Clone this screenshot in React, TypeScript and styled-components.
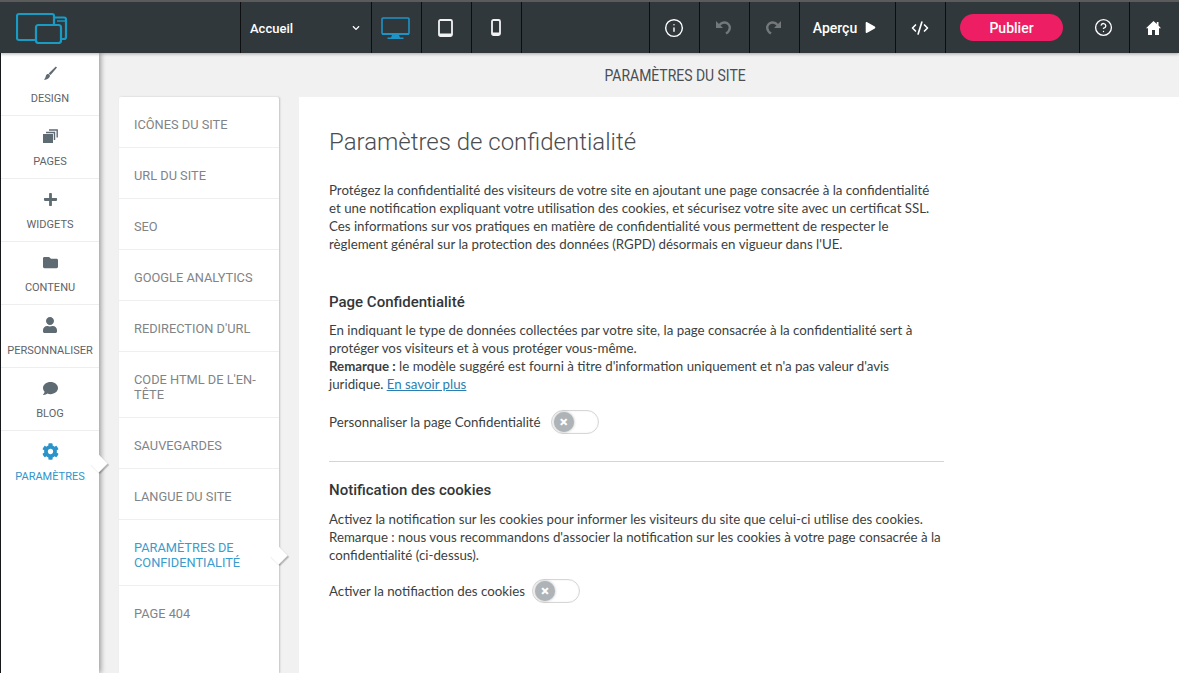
import styled, { createGlobalStyle } from 'styled-components';
import { ReactNode } from 'react';
import { Info, CircleHelp, CodeXml } from 'lucide-react';
import { FaPlus, FaFolder, FaUser, FaComment, FaCog, FaPlay, FaChevronDown } from 'react-icons/fa';

const GlobalStyle = createGlobalStyle`
  html, body {
    margin: 0;
    padding: 0;
    height: 100%;
    overflow: hidden;
    background: #f1f1f1;
    font-family: Roboto, "Liberation Sans", sans-serif;
  }
  * { box-sizing: border-box; }
`;

const Page = styled.div`
  width: 1179px;
  height: 673px;
  display: flex;
  flex-direction: column;
  overflow: hidden;
`;

/* barre du haut */
const TopBar = styled.header`
  flex: 0 0 53px;
  display: flex;
  align-items: stretch;
  background: #30383c;
  border-top: 2px solid #5b5b5b;
  position: relative;
  z-index: 3;
  box-shadow: 0 1px 3px rgba(0, 0, 0, 0.3);
`;

const LogoCell = styled.div`
  width: 240px;
  padding: 10px 0 0 16px;
`;

const ToolCell = styled.div<{ $w: number; $muted?: boolean }>`
  width: ${p => p.$w}px;
  flex: 0 0 ${p => p.$w}px;
  display: flex;
  align-items: center;
  justify-content: center;
  padding-right: 2px;
  border-left: 1px solid #0c0e0f;
  color: ${p => (p.$muted ? '#73787b' : '#fff')};
`;

const PageSelect = styled(ToolCell)`
  justify-content: space-between;
  padding: 1px 11px 0 9px;
  font-size: 13px;
  font-weight: 500;
`;

const PreviewCell = styled(ToolCell)`
  padding-right: 6px;
`;

const PreviewLabel = styled.span`
  font-size: 14px;
  font-weight: 500;
  margin-right: 8px;
`;

const PublishButton = styled.button`
  width: 103px;
  height: 27px;
  border: none;
  border-radius: 14px;
  background: #ed1e63;
  color: #fff;
  font-family: Roboto, sans-serif;
  font-size: 14px;
  font-weight: 500;
`;

const Body = styled.div`
  flex: 1;
  display: flex;
  min-height: 0;
`;

/* menu de gauche */
const SideBar = styled.nav`
  flex: 0 0 99px;
  background: #fff;
  border-left: 1px solid #16191b;
  box-shadow: 2px 0 5px rgba(0, 0, 0, 0.35);
  position: relative;
  z-index: 2;
`;

const SideItem = styled.div<{ $active?: boolean }>`
  position: relative;
  height: 63px;
  display: flex;
  flex-direction: column;
  align-items: center;
  padding-top: 10px;
  border-bottom: ${p => (p.$active ? 'none' : '1px solid #eeeeee')};
  color: ${p => (p.$active ? '#2a93c9' : '#5f6b73')};
`;

const SideIcon = styled.div`
  height: 20px;
  display: flex;
  align-items: center;
  justify-content: center;
`;

const SideLabel = styled.span<{ $active?: boolean }>`
  margin-top: 9px;
  font-size: 11px;
  line-height: 14px;
  color: ${p => (p.$active ? '#2f95ca' : '#5f6367')};
`;

const Notch = styled.span<{ $top: number; $left: number }>`
  position: absolute;
  top: ${p => p.$top}px;
  left: ${p => p.$left}px;
  width: 13px;
  height: 13px;
  background: #fff;
  transform: rotate(45deg);
  box-shadow: 2px 0 1px rgba(0, 0, 0, 0.25);
`;

const Workspace = styled.div`
  flex: 1;
  min-width: 0;
  display: flex;
  flex-direction: column;
`;

const WorkspaceTitle = styled.div`
  flex: 0 0 44px;
  display: flex;
  align-items: center;
  justify-content: center;
  padding-left: 72px;
  color: #4a4e51;
  font-size: 17px;
`;

const TitleText = styled.span`
  display: inline-block;
  transform: scaleX(0.82);
`;

const Columns = styled.div`
  flex: 1;
  min-height: 0;
  display: flex;
  gap: 20px;
  padding-left: 20px;
`;

/* sous-menu */
const SubNav = styled.div`
  flex: 0 0 160px;
  background: #fff;
  border-radius: 2px 2px 0 0;
  box-shadow: 1px 0 2px rgba(0, 0, 0, 0.2);
  position: relative;
`;

const SubItem = styled.div<{ $active?: boolean }>`
  position: relative;
  padding: 20px 15px 15px;
  border-bottom: 1px solid #efefef;
  font-size: 12.8px;
  line-height: 15px;
  color: ${p => (p.$active ? '#3a9bcd' : '#808487')};

  &:last-child {
    border-bottom: none;
  }
`;

/* contenu */
const Main = styled.main`
  flex: 1;
  background: #fff;
  padding: 29px 235px 0 30px;
  font-family: Lato, "Open Sans", sans-serif;
  color: #3c3f41;
  font-size: 13.3px;
  line-height: 18px;
`;

const Heading = styled.h1`
  margin: 0 0 23px;
  font-family: Roboto, sans-serif;
  font-weight: 300;
  font-size: 24px;
  line-height: 32px;
  color: #4a4d50;
`;

const Paragraph = styled.p`
  margin: 0;
  white-space: nowrap;
`;

const SectionTitle = styled.h2<{ $top: number; $bottom: number }>`
  margin: ${p => p.$top}px 0 ${p => p.$bottom}px;
  font-family: Roboto, sans-serif;
  font-weight: 500;
  font-size: 15px;
  line-height: 20px;
  color: #333638;
`;

const MoreLink = styled.a`
  color: #2a7fb0;
  text-decoration: underline;
`;

const ToggleRow = styled.div<{ $top: number; $gap: number }>`
  display: flex;
  align-items: center;
  gap: ${p => p.$gap}px;
  margin-top: ${p => p.$top}px;
  height: 26px;
`;

const Track = styled.div`
  width: 48px;
  height: 24px;
  border-radius: 12px;
  border: 1px solid #d6d6d6;
  background: #fff;
  padding: 1px 2px;
  box-shadow: inset 0 0 2px rgba(0, 0, 0, 0.08);
`;

const Knob = styled.div`
  width: 20px;
  height: 20px;
  border-radius: 50%;
  background: #adb3b7;
  box-shadow: 0 0 3px rgba(0, 0, 0, 0.3);
  color: #fff;
  font-size: 15px;
  font-weight: 900;
  line-height: 20px;
  text-align: center;
  font-family: Roboto, sans-serif;
`;

const Divider = styled.hr`
  border: none;
  border-top: 1px solid #d5d5d5;
  margin: 26px 0 18px;
`;

const LogoIcon = () => (
  <svg width="52" height="32" viewBox="0 0 52 32" fill="none" stroke="#1a9bc4" strokeWidth="2.2">
    <path d="M19 28H3A2 2 0 0 1 1 26V4A2 2 0 0 1 3 2H36A2 2 0 0 1 38 4V13" />
    <path d="M39 6.5V5.5H48A2 2 0 0 1 50 7.5V25A2 2 0 0 1 48 27H46" />
    <path d="M41 9H50" strokeWidth="1.4" />
    <rect x="20" y="13" width="25" height="18" rx="2.5" />
  </svg>
);

const DesktopIcon = () => (
  <svg width="29" height="22" viewBox="0 0 29 22" fill="none">
    <rect x="1" y="1" width="27" height="16" rx="1" stroke="#1f93c6" strokeWidth="1.6" />
    <path d="M1 16H28V18H1Z M11 18H18L19 20.5H10Z M6.5 20.5H22.5V22H6.5Z" fill="#1f93c6" />
  </svg>
);

const TabletIcon = () => (
  <svg width="15" height="18" viewBox="0 0 15 18" fill="none">
    <rect x="1" y="1" width="13" height="16" rx="1.5" stroke="#f2f2f2" strokeWidth="1.8" />
    <path d="M1 14.5H14V17H1Z" fill="#f2f2f2" />
  </svg>
);

const PhoneIcon = () => (
  <svg width="10" height="17" viewBox="0 0 10 17" fill="none">
    <rect x="1" y="1" width="8" height="15" rx="1.5" stroke="#f2f2f2" strokeWidth="1.8" />
    <path d="M1 13.5H9V16H1Z" fill="#f2f2f2" />
  </svg>
);

const UndoIcon = ({ flip }: { flip?: boolean }) => (
  <svg width="17" height="15" viewBox="0 0 17 15" fill="none" style={flip ? { transform: 'scaleX(-1)' } : undefined}>
    <path
      d="M4.5 5C6 3 8 2.2 10 2.5C13 3 15 5.4 14.8 8C14.6 10.4 13.2 12.2 11 13.6"
      stroke="currentColor"
      strokeWidth="2.4"
    />
    <path d="M1 1V8H8Z" fill="currentColor" />
  </svg>
);

const HomeIcon = () => (
  <svg width="15" height="14" viewBox="0 0 15 14" fill="currentColor">
    <path d="M7.5 0L10.8 3V1H12.5V4.6L15 7.2H13V14H9V9H6V14H2V7.2H0Z" />
  </svg>
);

const BrushIcon = () => (
  <svg width="13" height="14" viewBox="0 0 13 14" fill="currentColor">
    <path d="M11.8 0.4L13 1.6L6.6 9L4.6 7.4Z" />
    <path d="M4 8C5.5 8 6.6 9.5 5.6 11C4 13.5 1.5 14 0 13.5C1.5 12.5 1.5 10.5 2 9.5C2.5 8.5 3 8 4 8Z" />
  </svg>
);

const PagesIcon = () => (
  <svg width="15" height="14" viewBox="0 0 15 14" fill="none">
    <rect x="0" y="5" width="10" height="9" fill="currentColor" />
    <path d="M3 3.5H11.5V11" stroke="currentColor" strokeWidth="1.4" />
    <path d="M6 1H14.2V8.5" stroke="currentColor" strokeWidth="1.4" />
  </svg>
);

const sideItems: { label: string; icon: ReactNode; active?: boolean }[] = [
  { label: 'DESIGN', icon: <BrushIcon /> },
  { label: 'PAGES', icon: <PagesIcon /> },
  { label: 'WIDGETS', icon: <FaPlus size={15} /> },
  { label: 'CONTENU', icon: <FaFolder size={15} /> },
  { label: 'PERSONNALISER', icon: <FaUser size={16} /> },
  { label: 'BLOG', icon: <FaComment size={15} /> },
  { label: 'PARAMÈTRES', icon: <FaCog size={17} />, active: true },
];

const subItems: { label: ReactNode; active?: boolean }[] = [
  { label: 'ICÔNES DU SITE' },
  { label: 'URL DU SITE' },
  { label: 'SEO' },
  { label: 'GOOGLE ANALYTICS' },
  { label: "REDIRECTION D'URL" },
  { label: "CODE HTML DE L'EN-TÊTE" },
  { label: 'SAUVEGARDES' },
  { label: 'LANGUE DU SITE' },
  { label: 'PARAMÈTRES DE CONFIDENTIALITÉ', active: true },
  { label: 'PAGE 404' },
];

const Toggle = ({ label, top, gap }: { label: string; top: number; gap: number }) => (
  <ToggleRow $top={top} $gap={gap}>
    <span>{label}</span>
    <Track>
      <Knob>×</Knob>
    </Track>
  </ToggleRow>
);

export default function App() {
  return (
    <Page>
      <GlobalStyle />
      <TopBar>
        <LogoCell>
          <LogoIcon />
        </LogoCell>
        <PageSelect $w={131}>
          Accueil
          <FaChevronDown size={8} />
        </PageSelect>
        <ToolCell $w={50}>
          <DesktopIcon />
        </ToolCell>
        <ToolCell $w={50}>
          <TabletIcon />
        </ToolCell>
        <ToolCell $w={50}>
          <PhoneIcon />
        </ToolCell>
        <ToolCell $w={128} />
        <ToolCell $w={50}>
          <Info size={20} strokeWidth={1.7} />
        </ToolCell>
        <ToolCell $w={50} $muted>
          <UndoIcon />
        </ToolCell>
        <ToolCell $w={50} $muted>
          <UndoIcon flip />
        </ToolCell>
        <PreviewCell $w={96}>
          <PreviewLabel>Aperçu</PreviewLabel>
          <FaPlay size={11} />
        </PreviewCell>
        <ToolCell $w={50}>
          <CodeXml size={18} strokeWidth={2.2} />
        </ToolCell>
        <ToolCell $w={134}>
          <PublishButton>Publier</PublishButton>
        </ToolCell>
        <ToolCell $w={50}>
          <CircleHelp size={19} strokeWidth={1.7} />
        </ToolCell>
        <ToolCell $w={50}>
          <HomeIcon />
        </ToolCell>
      </TopBar>
      <Body>
        <SideBar>
          {sideItems.map(item => (
            <SideItem key={item.label} $active={item.active}>
              <SideIcon>{item.icon}</SideIcon>
              <SideLabel $active={item.active}>{item.label}</SideLabel>
              {item.active && <Notch $top={26} $left={91} />}
            </SideItem>
          ))}
        </SideBar>
        <Workspace>
          <WorkspaceTitle>
            <TitleText>PARAMÈTRES DU SITE</TitleText>
          </WorkspaceTitle>
          <Columns>
            <SubNav>
              {subItems.map((item, i) => (
                <SubItem key={i} $active={item.active}>
                  {item.label}
                  {item.active && <Notch $top={29} $left={153} />}
                </SubItem>
              ))}
            </SubNav>
            <Main>
              <Heading>Paramètres de confidentialité</Heading>
              <Paragraph>
                Protégez la confidentialité des visiteurs de votre site en ajoutant une page consacrée à la confidentialité
                <br />
                et une notification expliquant votre utilisation des cookies, et sécurisez votre site avec un certificat SSL.
                <br />
                Ces informations sur vos pratiques en matière de confidentialité vous permettent de respecter le
                <br />
                règlement général sur la protection des données (RGPD) désormais en vigueur dans l'UE.
              </Paragraph>
              <SectionTitle $top={39} $bottom={9}>Page Confidentialité</SectionTitle>
              <Paragraph>
                En indiquant le type de données collectées par votre site, la page consacrée à la confidentialité sert à
                <br />
                protéger vos visiteurs et à vous protéger vous-même.
                <br />
                <strong>Remarque :</strong> le modèle suggéré est fourni à titre d'information uniquement et n'a pas valeur d'avis
                <br />
                juridique. <MoreLink>En savoir plus</MoreLink>
              </Paragraph>
              <Toggle label="Personnaliser la page Confidentialité" top={16} gap={10} />
              <Divider />
              <SectionTitle $top={0} $bottom={10}>Notification des cookies</SectionTitle>
              <Paragraph>
                Activez la notification sur les cookies pour informer les visiteurs du site que celui-ci utilise des cookies.
                <br />
                Remarque : nous vous recommandons d'associer la notification sur les cookies à votre page consacrée à la
                <br />
                confidentialité (ci-dessus).
              </Paragraph>
              <Toggle label="Activer la notifiaction des cookies" top={14} gap={7} />
            </Main>
          </Columns>
        </Workspace>
      </Body>
    </Page>
  );
}
